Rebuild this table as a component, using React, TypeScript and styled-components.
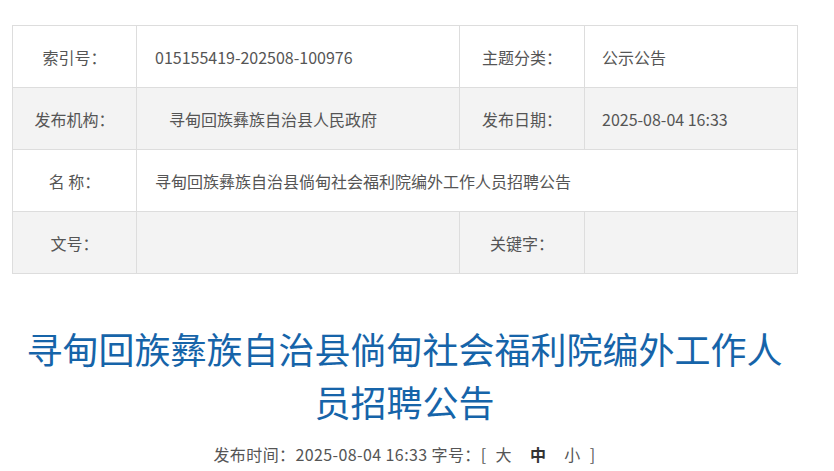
import styled, { createGlobalStyle } from 'styled-components';

const GlobalStyle = createGlobalStyle`
	body {
		margin: 0;
		background: #fff;
		font-family: 'Noto Sans CJK SC', 'Noto Sans', sans-serif;
		color: #555;
	}
`;

const Page = styled.div`
	width: 785px;
	margin-left: 12px;
	padding-top: 25px;
`;

const InfoTable = styled.table`
	width: 785px;
	border-collapse: collapse;
	table-layout: fixed;
	font-size: 16px;
	color: #555;
`;

const Row = styled.tr<{ $shaded?: boolean }>`
	height: 62px;
	background: ${({ $shaded }) => ($shaded ? '#f3f3f3' : '#fff')};
`;

const Label = styled.td`
	border: 1px solid #ddd;
	text-align: center;
	padding: 0;
`;

const Value = styled.td<{ $indent?: number }>`
	border: 1px solid #ddd;
	text-align: left;
	padding: 0 0 0 ${({ $indent }) => $indent ?? 18}px;
`;

const Title = styled.h1`
	margin: 48px 0 0;
	text-align: center;
	font-size: 36px;
	line-height: 53px;
	font-weight: normal;
	color: #1664a9;
`;

const Meta = styled.div`
	margin-top: 14px;
	text-align: center;
	font-size: 16px;
	line-height: 24px;
	letter-spacing: 0.4px;
	color: #555;
`;

const SizeLink = styled.span<{ $active?: boolean }>`
	margin: 0 9px;
	font-weight: ${({ $active }) => ($active ? 'bold' : 'normal')};
	color: ${({ $active }) => ($active ? '#333' : '#555')};
	cursor: pointer;
`;

export default function App() {
	return (
		<>
			<GlobalStyle />
			<Page>
				<InfoTable>
					<colgroup>
						<col style={{ width: 124 }} />
						<col style={{ width: 323 }} />
						<col style={{ width: 125 }} />
						<col style={{ width: 213 }} />
					</colgroup>
					<tbody>
						<Row>
							<Label>索引号：</Label>
							<Value>015155419-202508-100976</Value>
							<Label>主题分类：</Label>
							<Value $indent={17}>公示公告</Value>
						</Row>
						<Row $shaded>
							<Label>发布机构：</Label>
							<Value $indent={32}>寻甸回族彝族自治县人民政府</Value>
							<Label>发布日期：</Label>
							<Value $indent={17}>2025-08-04 16:33</Value>
						</Row>
						<Row>
							<Label>名 称：</Label>
							<Value colSpan={3}>寻甸回族彝族自治县倘甸社会福利院编外工作人员招聘公告</Value>
						</Row>
						<Row $shaded>
							<Label>文号：</Label>
							<Value />
							<Label>关键字：</Label>
							<Value />
						</Row>
					</tbody>
				</InfoTable>
				<Title>寻甸回族彝族自治县倘甸社会福利院编外工作人员招聘公告</Title>
				<Meta>
					发布时间：2025-08-04 16:33 字号：[
					<SizeLink>大</SizeLink>
					<SizeLink $active>中</SizeLink>
					<SizeLink>小</SizeLink>]
				</Meta>
			</Page>
		</>
	);
}
